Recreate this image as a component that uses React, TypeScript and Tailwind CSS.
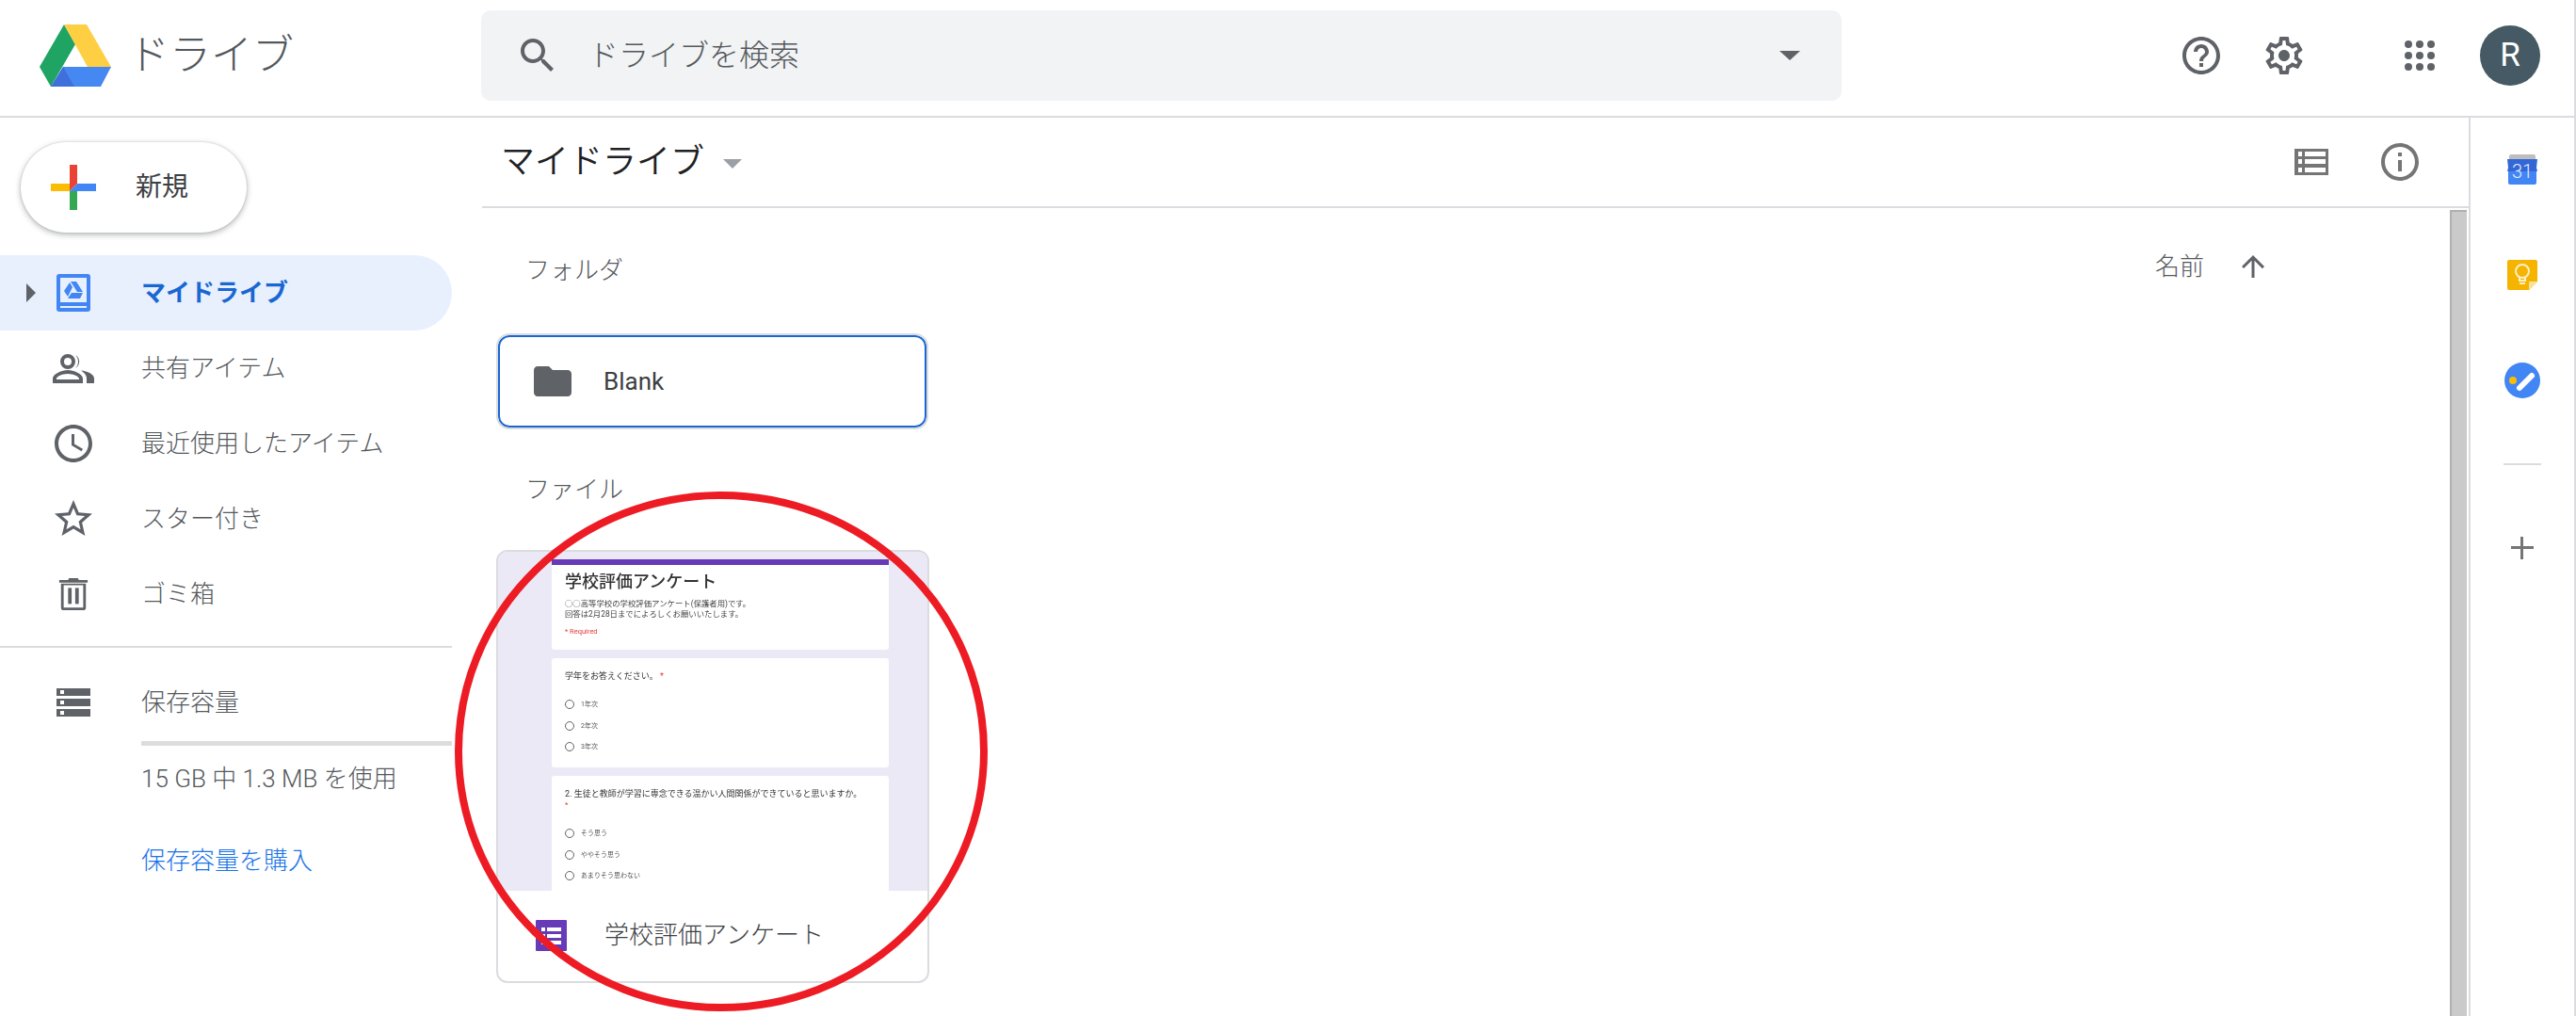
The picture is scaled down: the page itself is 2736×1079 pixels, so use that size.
const font = { fontFamily: '"Roboto", "Noto Sans CJK JP", sans-serif' };

const Mi = ({ d, size, className }: { d: string; size: number; className?: string }) => (
  <svg width={size} height={size} viewBox="0 0 24 24" fill="currentColor" className={className}>
    <path d={d} />
  </svg>
);

const DriveLogo = () => (
  <svg width="76" height="68" viewBox="0 0 76 68" className="shrink-0">
    <polygon points="26,1 38,22 12,67 0,46" fill="#1fa463" />
    <polygon points="26,1 50,1 76,46 51,46" fill="#ffcf43" />
    <polygon points="25,46 76,46 65,67 12,67" fill="#4688f1" />
    <polygon points="25,46 37,67 12,67" fill="#3f6fdb" />
  </svg>
);

const PlusLogo = () => (
  <svg width="48" height="48" viewBox="0 0 48 48" className="shrink-0">
    <polygon points="20,0 28,0 28,20 20,28" fill="#ea4335" />
    <polygon points="28,20 48,20 48,28 20,28" fill="#4285f4" />
    <polygon points="0,20 20,20 20,28 0,28" fill="#fbbc04" />
    <polygon points="20,28 28,28 28,48 20,48" fill="#34a853" />
  </svg>
);

const MyDriveIcon = () => (
  <svg width="36" height="40" viewBox="0 0 36 40">
    <rect width="36" height="40" rx="3" fill="#4285f4" />
    <rect x="4" y="4" width="28" height="26" fill="#e8f0fe" />
    <rect x="4" y="34" width="28" height="2" fill="#e8f0fe" />
    <polygon points="15,8 21,8 28,19 22,19" fill="#4285f4" />
    <polygon points="14,9 17,14 12,24 8,18" fill="#4285f4" />
    <polygon points="16,20 28,20 25,26 12,26" fill="#4285f4" />
  </svg>
);

const PeopleIcon = () => (
  <svg width="44" height="31" viewBox="0 0 44 31" fill="#5f6368">
    <path
      fillRule="evenodd"
      d="M16 0a8 8 0 1 1 0 16 8 8 0 0 1 0-16zm0 4a4 4 0 1 0 0 8 4 4 0 0 0 0-8zM0 31v-5c0-5 10-9 16-9s16 4 16 9v5zm4-4h24v-1c0-2-6-5-12-5s-12 3-12 5z"
    />
    <path d="M24 1a8 8 0 0 1 0 14c2-2 3-4 3-7s-1-5-3-7zM30 17.5c7 .5 14 4 14 8.5v5h-8v-5c0-3-2-6-6-8.5z" />
  </svg>
);

const TrashIcon = () => (
  <svg width="32" height="34" viewBox="0 0 32 36" fill="#5f6368">
    <path d="M11 0h10l1 2h10v3H0V2h10z" />
    <path d="M2 6h28v27a3 3 0 0 1-3 3H5a3 3 0 0 1-3-3zm3 2v25h22V8z" fillRule="evenodd" />
    <rect x="10" y="11" width="4" height="18" />
    <rect x="18" y="11" width="4" height="18" />
  </svg>
);

const StorageIcon = () => (
  <svg width="36" height="30" viewBox="0 0 36 30">
    {[0, 11, 22].map((y) => (
      <g key={y}>
        <rect y={y} width="36" height="8" fill="#5f6368" />
        <rect x="4" y={y + 2} width="4" height="4" fill="#fff" />
      </g>
    ))}
  </svg>
);

const ListIcon = () => (
  <svg width="36" height="28" viewBox="0 0 36 28">
    <rect width="36" height="28" fill="#757575" />
    {[3, 11, 20].map((y) => (
      <g key={y} fill="#fff">
        <rect x="4" y={y} width="4" height="5" />
        <rect x="11" y={y} width="22" height="5" />
      </g>
    ))}
  </svg>
);

const CalendarIcon = () => (
  <div className="relative w-8 h-8 overflow-hidden">
    <svg width="32" height="32" viewBox="0 0 32 32" className="absolute inset-0">
      <path d="M2 5V2a2 2 0 0 1 2-2h24a2 2 0 0 1 2 2v3z" fill="#bdbdbd" />
      <path d="M0 5h32l-1 9 1 4H0l1-4z" fill="#3367d6" />
      <path d="M1 18h30v12a2 2 0 0 1-2 2H3a2 2 0 0 1-2-2z" fill="#4285f4" />
    </svg>
    <span className="absolute inset-x-0 top-[8px] text-center text-[20px] leading-[20px] font-light text-[#e4ecfb]">31</span>
  </div>
);

const KeepIcon = () => (
  <svg width="32" height="32" viewBox="0 0 32 32">
    <path d="M2 0h28a2 2 0 0 1 2 2v21l-9 9H2a2 2 0 0 1-2-2V2a2 2 0 0 1 2-2z" fill="#f4b400" />
    <path d="M23 32v-9h9z" fill="#fae19a" />
    <circle cx="16" cy="12" r="7" fill="none" stroke="#fdf0c8" strokeWidth="2" />
    <path d="M13 18v4h6v-4M13 25h6" fill="none" stroke="#fdf0c8" strokeWidth="2" />
  </svg>
);

const TasksIcon = () => (
  <svg width="38" height="38" viewBox="0 0 38 38">
    <circle cx="19" cy="19" r="19" fill="#4285f4" />
    <line x1="16" y1="27" x2="29" y2="14" stroke="#fff" strokeWidth="6" strokeLinecap="round" />
    <circle cx="9" cy="19" r="4" fill="#fbbc04" />
  </svg>
);

const FormsIcon = () => (
  <svg width="33" height="33" viewBox="0 0 33 33" className="shrink-0">
    <rect width="33" height="33" rx="1" fill="#673ab7" />
    <g fill="#fff">
      <rect x="6" y="8" width="4" height="4" />
      <rect x="12" y="8" width="15" height="4" />
      <rect x="6" y="15" width="4" height="4" />
      <rect x="12" y="15" width="15" height="4" />
      <rect x="6" y="22" width="4" height="4" />
      <rect x="12" y="22" width="15" height="4" />
    </g>
  </svg>
);

const paths = {
  search:
    'M15.5 14h-.79l-.28-.27C15.41 12.59 16 11.11 16 9.5 16 5.91 13.09 3 9.5 3S3 5.91 3 9.5 5.91 16 9.5 16c1.61 0 3.09-.59 4.23-1.57l.27.28v.79l5 4.99L20.49 19l-4.99-5zm-6 0C7.01 14 5 11.99 5 9.5S7.01 5 9.5 5 14 7.01 14 9.5 11.99 14 9.5 14z',
  help: 'M11 18h2v-2h-2v2zm1-16C6.48 2 2 6.48 2 12s4.48 10 10 10 10-4.48 10-10S17.52 2 12 2zm0 18c-4.41 0-8-3.59-8-8s3.59-8 8-8 8 3.59 8 8-3.59 8-8 8zm0-14c-2.21 0-4 1.79-4 4h2c0-1.1.9-2 2-2s2 .9 2 2c0 2-3 1.75-3 5h2c0-2.25 3-2.5 3-5 0-2.21-1.79-4-4-4z',
  gear: 'M19.43 12.98c.04-.32.07-.64.07-.98 0-.34-.03-.66-.07-.98l2.11-1.65c.19-.15.24-.42.12-.64l-2-3.46c-.09-.16-.26-.25-.44-.25-.06 0-.12.01-.17.03l-2.49 1c-.52-.4-1.08-.73-1.69-.98l-.38-2.65C14.46 2.18 14.25 2 14 2h-4c-.25 0-.46.18-.49.42l-.38 2.65c-.61.25-1.17.59-1.69.98l-2.49-1c-.06-.02-.12-.03-.18-.03-.17 0-.34.09-.43.25l-2 3.46c-.13.22-.07.49.12.64l2.11 1.65c-.04.32-.07.65-.07.98 0 .33.03.66.07.98l-2.11 1.65c-.19.15-.24.42-.12.64l2 3.46c.09.16.26.25.44.25.06 0 .12-.01.17-.03l2.49-1c.52.4 1.08.73 1.69.98l.38 2.65c.03.24.24.42.49.42h4c.25 0 .46-.18.49-.42l.38-2.65c.61-.25 1.17-.59 1.69-.98l2.49 1c.06.02.12.03.18.03.17 0 .34-.09.43-.25l2-3.46c.12-.22.07-.49-.12-.64l-2.11-1.65zm-1.98-1.71c.04.31.05.52.05.73 0 .21-.02.43-.05.73l-.14 1.13.89.7 1.08.84-.7 1.21-1.27-.51-1.04-.42-.9.68c-.43.32-.84.56-1.25.73l-1.06.43-.16 1.13-.2 1.35h-1.4l-.19-1.35-.16-1.13-1.06-.43c-.43-.18-.83-.41-1.23-.71l-.91-.7-1.06.43-1.27.51-.7-1.21 1.08-.84.89-.7-.14-1.13c-.03-.31-.05-.54-.05-.74s.02-.43.05-.73l.14-1.13-.89-.7-1.08-.84.7-1.21 1.27.51 1.04.42.9-.68c.43-.32.84-.56 1.25-.73l1.06-.43.16-1.13.2-1.35h1.39l.19 1.35.16 1.13 1.06.43c.43.18.83.41 1.23.71l.91.7 1.06-.43 1.27-.51.7 1.21-1.07.85-.89.7.14 1.13zM12 9c-1.66 0-3 1.34-3 3s1.34 3 3 3 3-1.34 3-3-1.34-3-3-3z',
  clock:
    'M11.99 2C6.47 2 2 6.48 2 12s4.47 10 9.99 10C17.52 22 22 17.52 22 12S17.52 2 11.99 2zM12 20c-4.42 0-8-3.58-8-8s3.58-8 8-8 8 3.58 8 8-3.58 8-8 8zm.5-13H11v6l5.25 3.15.75-1.23-4.5-2.67z',
  star: 'M22 9.24l-7.19-.62L12 2 9.19 8.63 2 9.24l5.46 4.73L5.82 21 12 17.27 18.18 21l-1.63-7.03L22 9.24zM12 15.4l-3.76 2.27 1-4.28-3.32-2.88 4.38-.38L12 6.1l1.71 4.04 4.38.38-3.32 2.88 1 4.28L12 15.4z',
  info: 'M11 7h2v2h-2zm0 4h2v6h-2zm1-9C6.48 2 2 6.48 2 12s4.48 10 10 10 10-4.48 10-10S17.52 2 12 2zm0 18c-4.41 0-8-3.59-8-8s3.59-8 8-8 8 3.59 8 8-3.59 8-8 8z',
  arrowUp: 'M4 12l1.41 1.41L11 7.83V20h2V7.83l5.58 5.59L20 12l-8-8-8 8z',
  folder: 'M10 4H4c-1.1 0-2 .9-2 2v12c0 1.1.9 2 2 2h16c1.1 0 2-.9 2-2V8c0-1.1-.9-2-2-2h-8l-2-2z',
};

const navItems = [
  { label: '共有アイテム', icon: <PeopleIcon /> },
  { label: '最近使用したアイテム', icon: <Mi d={paths.clock} size={48} /> },
  { label: 'スター付き', icon: <Mi d={paths.star} size={48} /> },
  { label: 'ゴミ箱', icon: <TrashIcon /> },
];

const Radio = ({ label }: { label: string }) => (
  <div className="flex items-center h-[22.5px] gap-[7px]">
    <span className="w-[10px] h-[10px] rounded-full border border-[#5f6368] shrink-0" />
    <span className="text-[7px] text-[#555]">{label}</span>
  </div>
);

const Thumbnail = () => (
  <div className="h-[360px] bg-[#ece9f7] overflow-hidden pl-[57px] pr-[37px] pt-[8px] rounded-t-[10px]">
    <div className="w-[358px] flex flex-col gap-[9px] blur-[0.5px]">
      <div className="h-[96px] bg-white rounded-b-[3px] border-t-[6px] border-[#673ab7] px-[14px] pt-[6px]">
        <div className="text-[18px] leading-[24px] font-medium text-[#333]">学校評価アンケート</div>
        <div className="mt-[6px] text-[8.4px] leading-[11px] text-[#444] whitespace-nowrap">
          ○○高等学校の学校評価アンケート(保護者用)です。
          <br />
          回答は2月28日までによろしくお願いいたします。
        </div>
        <div className="mt-[8px] text-[7.5px] leading-[10px] text-[#e53935]">* Required</div>
      </div>
      <div className="h-[116px] bg-white rounded-[3px] px-[14px] pt-[13px]">
        <div className="text-[9px] leading-[12px] text-[#333]">
          学年をお答えください。 <span className="text-[#e53935]">*</span>
        </div>
        <div className="mt-[13px]">
          <Radio label="1年次" />
          <Radio label="2年次" />
          <Radio label="3年次" />
        </div>
      </div>
      <div className="h-[140px] bg-white rounded-t-[3px] px-[14px] pt-[13px]">
        <div className="text-[9px] leading-[12px] text-[#333] whitespace-nowrap">
          2. 生徒と教師が学習に専念できる温かい人間関係ができていると思いますか。
        </div>
        <div className="text-[8px] leading-[12px] text-[#e53935]">*</div>
        <div className="mt-[13px]">
          <Radio label="そう思う" />
          <Radio label="ややそう思う" />
          <Radio label="あまりそう思わない" />
        </div>
      </div>
    </div>
  </div>
);

export default function App() {
  return (
    <div style={font} className="w-full h-screen overflow-hidden bg-white flex flex-col border-r-2 border-[#dadce0]">
      <header className="h-[125px] shrink-0 flex items-center pb-[5px] border-b-2 border-[#dadce0]">
        <div className="w-[511px] shrink-0 flex items-center pl-[42px] gap-[18px]">
          <DriveLogo />
          <span className="text-[44px] leading-none font-light text-[#54585c]">ドライブ</span>
        </div>
        <div className="w-[1445px] h-[96px] rounded-[10px] bg-[#f1f3f4] flex items-center pl-[36px] pr-[44px] text-[#5f6368]">
          <Mi d={paths.search} size={48} className="shrink-0" />
          <span className="ml-[30px] flex-1 text-[32px] font-light leading-none text-[#54585c]">ドライブを検索</span>
          <span className="w-0 h-0 border-x-[11px] border-t-[10px] border-x-transparent border-t-[#5f6368]" />
        </div>
        <div className="flex-1 flex items-center text-[#5f6368]">
          <Mi d={paths.help} size={48} className="ml-[358px]" />
          <Mi d={paths.gear} size={48} className="ml-[40px]" />
          <div className="ml-[104px] grid grid-cols-3 gap-[4px]">
            {Array.from({ length: 9 }).map((_, i) => (
              <span key={i} className="w-[8px] h-[8px] rounded-full bg-[#5f6368]" />
            ))}
          </div>
          <div className="ml-[48px] w-[64px] h-[64px] rounded-full bg-[#455a64] text-white text-[35px] flex items-center justify-center">
            R
          </div>
        </div>
      </header>

      <div className="flex-1 flex min-h-0">
        <aside className="w-[512px] shrink-0">
          <div className="w-[480px]">
            <div className="pl-[22px] pt-[26px] pb-[24px]">
              <div className="w-[240px] h-[96px] rounded-full bg-white shadow-[0_2px_6px_rgba(60,64,67,0.4),0_0_2px_rgba(60,64,67,0.2)] flex items-center pl-[32px] gap-[42px]">
                <PlusLogo />
                <span className="text-[28px] text-[#3c4043]">新規</span>
              </div>
            </div>
            <div className="h-[80px] bg-[#e8f0fe] rounded-r-[40px] flex items-center">
              <span className="ml-[28px] w-0 h-0 border-y-[10px] border-l-[10px] border-y-transparent border-l-[#5f6368]" />
              <div className="ml-[22px]">
                <MyDriveIcon />
              </div>
              <span className="ml-[54px] text-[26px] font-bold text-[#1967d2]">マイドライブ</span>
            </div>
            {navItems.map((item) => (
              <div key={item.label} className="h-[80px] flex items-center text-[#5f6368]">
                <div className="w-[48px] ml-[54px] flex justify-center">{item.icon}</div>
                <span className="ml-[48px] text-[26px] font-light text-[#54585c]">{item.label}</span>
              </div>
            ))}
            <div className="mt-[15px] border-t-2 border-[#dadce0] pt-[42px]">
              <div className="flex items-center h-[32px] pl-[60px] text-[#5f6368]">
                <StorageIcon />
                <span className="ml-[54px] text-[26px] font-light text-[#54585c]">保存容量</span>
              </div>
              <div className="ml-[150px] mt-[25px]">
                <div className="h-[5px] bg-[#dddddd]" />
                <div className="mt-[19px] text-[26px] leading-[32px] font-light text-[#54585c]">15 GB 中 1.3 MB を使用</div>
                <div className="mt-[55px] text-[26px] leading-[32px] font-light text-[#1a73e8]">保存容量を購入</div>
              </div>
            </div>
          </div>
        </aside>

        <main className="flex-1 min-w-0 flex flex-col border-r-2 border-[#dadce0]">
          <div className="h-[96px] shrink-0 border-b-2 border-[#dadce0] flex items-center pl-[20px] text-[#757575]">
            <span className="text-[36px] font-[350] text-[#202124]">マイドライブ</span>
            <span className="ml-[20px] mt-[4px] w-0 h-0 border-x-[10px] border-t-[10px] border-x-transparent border-t-[#9aa0a6]" />
            <div className="ml-auto mr-[49px] flex items-center gap-[52px]">
              <ListIcon />
              <Mi d={paths.info} size={48} />
            </div>
          </div>
          <div className="flex-1 min-h-0 flex">
            <div className="flex-1 min-w-0 pl-[15px]">
              <div className="h-[124px] flex items-center justify-between pl-[31px] pr-[191px] text-[#5f6368]">
                <span className="pt-[8px] text-[26px] font-light text-[#54585c]">フォルダ</span>
                <div className="flex items-center gap-[34px]">
                  <span className="text-[26px] font-light text-[#54585c]">名前</span>
                  <Mi d={paths.arrowUp} size={36} />
                </div>
              </div>
              <div className="w-[455px] h-[98px] rounded-[12px] border-2 border-[#1967d2] outline-2 outline-[#dadce0] flex items-center pl-[32px] ml-[2px] mt-[11px]">
                <Mi d={paths.folder} size={48} className="text-[#5f6368] shrink-0" />
                <span className="ml-[30px] text-[26px] text-[#3c4043]">Blank</span>
              </div>
              <div className="h-[124px] flex items-center pt-[8px] pl-[31px] text-[26px] font-light text-[#54585c]">ファイル</div>
              <div className="relative w-[460px] h-[460px] rounded-[12px] border-2 border-[#dadce0] mt-[6px]">
                <Thumbnail />
                <div className="h-[98px] flex items-center pb-[4px] pl-[40px] gap-[40px]">
                  <FormsIcon />
                  <span className="text-[26px] font-light text-[#3c4043]">学校評価アンケート</span>
                </div>
                <svg width="566" height="552" viewBox="0 0 566 552" className="absolute left-[-46px] top-[-64px]">
                  <ellipse cx="283" cy="276" rx="279" ry="272" fill="none" stroke="#ed1c24" strokeWidth="8" />
                </svg>
              </div>
            </div>
            <div className="w-[18px] mr-[2px] mt-[2px] shrink-0 bg-[#cacaca] border-l-2 border-t-2 border-[#b0b0b0]" />
          </div>
        </main>

        <aside className="w-[110px] shrink-0 flex flex-col items-center text-[#757575]">
          <div className="mt-[39px]">
            <CalendarIcon />
          </div>
          <div className="mt-[80px]">
            <KeepIcon />
          </div>
          <div className="mt-[77px]">
            <TasksIcon />
          </div>
          <div className="mt-[69px] w-[40px] h-[2px] bg-[#dadce0]" />
          <div className="mt-[76px] relative w-[24px] h-[24px]">
            <span className="absolute left-[10px] top-0 w-[3px] h-[24px] bg-[#757575]" />
            <span className="absolute left-0 top-[10px] w-[24px] h-[3px] bg-[#757575]" />
          </div>
        </aside>
      </div>
    </div>
  );
}
